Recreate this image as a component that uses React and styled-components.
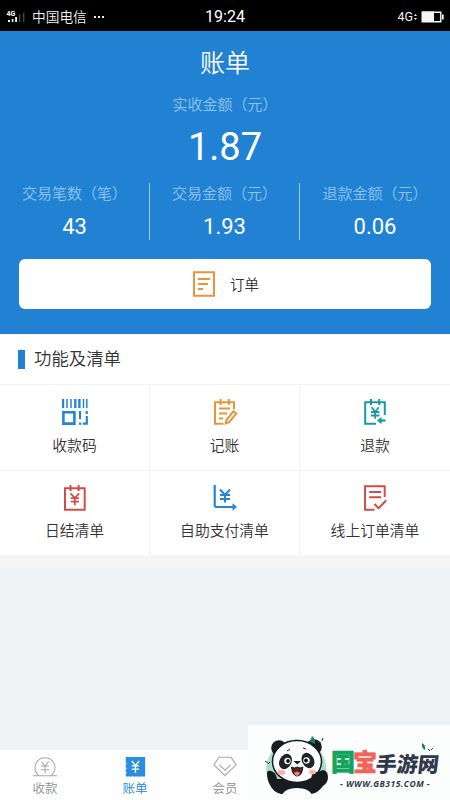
import React from 'react';
import styled, { createGlobalStyle } from 'styled-components';

const GlobalStyle = createGlobalStyle`
  * {
    box-sizing: border-box;
  }

  body {
    margin: 0;
    background: #eef2f5;
    font-family: Roboto, 'Noto Sans CJK SC', sans-serif;
    font-weight: 350;
    color: #333333;
  }
`;

const Page = styled.div`
  position: relative;
  width: 450px;
  height: 800px;
  display: flex;
  flex-direction: column;
  overflow: hidden;
`;

// Status bar
const StatusBar = styled.header`
  height: 31px;
  flex: none;
  display: grid;
  grid-template-columns: 1fr auto 1fr;
  align-items: center;
  padding: 2px 6px 0;
  background: #000000;
  color: #f2f2f2;
  line-height: 20px;
`;

const Carrier = styled.div`
  display: flex;
  align-items: center;
  gap: 6px;
  font-size: 13.7px;
`;

const Clock = styled.div`
  font-size: 16px;
  font-weight: 400;
  color: #ffffff;
`;

const Power = styled.div`
  display: flex;
  align-items: center;
  justify-content: flex-end;
  font-size: 12.5px;
  font-weight: 400;
`;

// Summary
const Summary = styled.section`
  height: 303px;
  flex: none;
  display: flex;
  flex-direction: column;
  align-items: center;
  padding: 17px 19px 0;
  background: #2182d4;
  color: #ffffff;
`;

const Title = styled.h1`
  margin: 0;
  font-size: 25px;
  font-weight: 350;
  line-height: 32px;
`;

const Label = styled.div`
  font-size: 15px;
  line-height: 20px;
  white-space: nowrap;
  color: #8fc2ee;
`;

const TotalLabel = styled(Label)`
  margin-top: 15px;
`;

const Total = styled.div`
  margin-top: 12px;
  font-size: 38px;
  font-weight: 400;
  line-height: 40px;
`;

const Stats = styled.div`
  display: grid;
  grid-template-columns: repeat(3, 150px);
  width: 450px;
  margin-top: 16px;
`;

const Stat = styled.div`
  height: 57px;
  display: flex;
  flex-direction: column;
  align-items: center;
  padding-top: 1px;
  border-right: ${({ $last }) => ($last ? 'none' : '1px solid #9cc9ee')};
`;

const StatValue = styled.div`
  margin-top: 9px;
  font-size: 22px;
  font-weight: 400;
  line-height: 28px;
`;

const OrderButton = styled.button`
  width: 412px;
  height: 50px;
  margin: 19px 0 0;
  padding: 0 0 1px;
  display: flex;
  align-items: center;
  justify-content: center;
  gap: 13px;
  border: none;
  border-radius: 6px;
  background: #ffffff;
  color: #333333;
  font-family: inherit;
  font-size: 14.5px;
  font-weight: 350;
`;

// Functions
const SectionTitle = styled.h2`
  height: 50px;
  flex: none;
  margin: 0;
  padding-left: 18px;
  display: flex;
  align-items: center;
  gap: 9px;
  background: #ffffff;
  font-size: 17.4px;
  font-weight: 350;
  line-height: 24px;

  &::before {
    content: '';
    width: 7px;
    height: 19px;
    background: #2182d4;
  }
`;

const Grid = styled.section`
  display: grid;
  grid-template-columns: repeat(3, 150px);
  grid-template-rows: 86px 85px;
  flex: none;
  background: #ffffff;
`;

const Cell = styled.div`
  display: flex;
  flex-direction: column;
  align-items: center;
  padding-top: 14px;
  border-top: 1px solid #f3f3f3;
  border-right: 1px solid #f3f3f3;
  font-size: 14.8px;
  line-height: 20px;

  &:nth-child(3n) {
    border-right: none;
  }

  svg {
    margin-bottom: 11px;
  }

  &:nth-child(n + 4) svg {
    margin-bottom: 10px;
  }
`;

const Spacer = styled.div`
  flex: 1;
  border-top: 13px solid #f5f5f5;
  background: #eef2f5;
`;

// Bottom tabs
const TabBar = styled.nav`
  height: 50px;
  flex: none;
  display: grid;
  grid-template-columns: repeat(5, 90px);
  background: #fefefe;
`;

const Tab = styled.div`
  display: flex;
  flex-direction: column;
  align-items: center;
  padding-top: 5px;
  color: ${({ $active }) => ($active ? '#2588d8' : '#8f8f8f')};
  font-size: 12.5px;
  line-height: 18px;

  svg {
    margin-bottom: 1px;
  }
`;

// Site badge over the lower right corner
const Badge = styled.aside`
  position: absolute;
  right: 0;
  bottom: 0;
  width: 202px;
  height: 75px;
  display: flex;
  padding-left: 12px;
  background: #fcfdfd;
`;

const Brand = styled.div`
  display: flex;
  flex-direction: column;
  padding: 20px 0 0 3px;
`;

const BrandName = styled.div`
  position: relative;
  display: flex;
  align-items: center;
  height: 32px;
  font-family: 'Noto Sans CJK SC', sans-serif;
  font-weight: 900;
  line-height: 32px;
`;

const BrandMark = styled.span`
  width: 22px;
  font-size: 24px;
  color: ${({ $color }) => $color};
  -webkit-text-stroke: 0.6px ${({ $color }) => $color};
`;

const BrandRest = styled.span`
  margin: 4px 0 0 1px;
  font-size: 21px;
  color: #30394a;
  transform: skewX(-7deg);
`;

const Sprout = styled.svg`
  position: absolute;
  left: 90px;
  top: -4px;
`;

const BrandUrl = styled.div`
  padding: 1px 0 0 9px;
  font-family: 'Open Sans', sans-serif;
  font-size: 8.5px;
  font-style: italic;
  font-weight: 700;
  line-height: 12px;
  letter-spacing: 0.5px;
  white-space: nowrap;
  color: #30394a;
`;

const Icon = ({ size = 26, color, width = 2, children }) => (
  <svg width={size} height={size} viewBox="0 0 26 26" fill="none" stroke={color} strokeWidth={width}>
    {children}
  </svg>
);

const SignalIcon = () => (
  <svg width="20" height="14" viewBox="0 0 20 14" fill="#ffffff">
    <text x="0.5" y="5.6" fontSize="7" fontWeight="700" fontFamily="Roboto">4G</text>
    <path d="M2 10h2v2H2zM5.800 9h1.600v3H5.800zM9.200 7H11v5H9.200z" />
    <path d="M13 4.500h1.400V12H13zM17 2.500h1.400V12H17z" fill="#484848" />
  </svg>
);

const MoreIcon = () => (
  <svg width="12" height="4" viewBox="0 0 12 4" fill="#eeeeee">
    <path d="M1 1h2v2H1zM5 1h2v2H5zM9 1h2v2H9z" />
  </svg>
);

const BatteryIcon = () => (
  <svg width="31" height="14" viewBox="0 0 31 14" fill="#f5f5f5">
    <path d="M1 6l1.500-2L4 6zM1 8l1.500 2L4 8z" />
    <path d="M9 1.500h12v10H9z" />
    <path d="M9.200 2.200h18.600v9.600H9.200z" fill="none" stroke="#f5f5f5" strokeWidth="1.400" />
    <path d="M29 4.500h1.700v5H29z" />
  </svg>
);

const OrderIcon = () => (
  <Icon color="#e8953a">
    <path d="M3 1.200h20v23.600H3z" />
    <path d="M7 8h12M7 13h10M7 18h5" />
  </Icon>
);

const CodeIcon = () => (
  <Icon color="#2585d5">
    <path d="M1 0v9M13.300 0v9M17.400 0v9" strokeWidth="2.400" />
    <path d="M5 0v9M9 0v9M21.500 0v9M24.800 0v9" strokeWidth="1.500" />
    <path d="M1.400 13.200h11v11.400h-11z" strokeWidth="2.600" />
    <path d="M18 12v8M24.700 12v3M17 24.600h2.300M20.800 24.600h4V17" strokeWidth="2.200" />
  </Icon>
);

const NoteIcon = () => (
  <Icon color="#e8953a">
    <path d="M22 10V3.200H3v21.600h8.500M8.500 0v6M16.800 0v6" />
    <path d="M7 9.500h11M7 14.500h8M7 19.500h4" />
    <path d="M21.500 12.200l2.800 2.400-7.200 8.600-3.400 1.200.7-3.400z" />
  </Icon>
);

const RefundIcon = () => (
  <Icon color="#189aa3">
    <path d="M22.800 16V3.200H3.200v21.600H14M9 0v6M17.200 0v6" />
    <path d="M9.500 8.200l3.700 4.500 3.700-4.500M9 13h8.500M9 16.500h8.500M13.200 12.500v7.200" strokeWidth="1.800" />
    <path d="M23.500 21.500h-5" strokeWidth="2.200" />
    <path d="M19.500 17.800v7.400L15 21.500z" fill="#189aa3" stroke="none" />
  </Icon>
);

const DailyIcon = () => (
  <Icon color="#d24c48">
    <path d="M3 3.200h19.700v21.600H3zM8.500 0v6M16.600 0v6" />
    <path d="M8.500 8.300l4.300 4.700 4.300-4.700M8.700 13.200H17M8.700 16.700H17M12.800 12.800v7.400" strokeWidth="1.800" />
  </Icon>
);

const SelfPayIcon = () => (
  <Icon color="#2585d5">
    <path d="M2.700 0v20q0 2 2 2H22" strokeWidth="2.200" />
    <path d="M20.500 18.300v7.400L25 22z" fill="#2585d5" stroke="none" />
    <path d="M8 4.500l5 5.500 5-5.500M8 10h10M8 14h10M13 9.800v7.800" />
  </Icon>
);

const OnlineIcon = () => (
  <Icon color="#d24c48">
    <path d="M22.700 12V1.200H3v23.600h9.500M7.200 7h12M7.200 12.300h12M12.500 19l4.100 4.200 7.600-8" />
  </Icon>
);

const CollectTab = () => (
  <Icon size={24} color="#a7a7a7" width={1.1}>
    <path d="M0 22.500h26M6.500 22.300a10.800 10.800 0 1 1 13 0" />
    <path d="M9 7l4 5 4-5M8.500 12h9M8.500 16h9M13 12v8" />
  </Icon>
);

const BillTab = () => (
  <Icon size={24} color="#ffffff" width={1.5}>
    <path d="M3 2.300h21v21H3v-3l1.300-1-1.300-1v-3l1.300-1-1.300-1v-3l1.300-1L3 8.300z" fill="#2b8dde" stroke="none" />
    <path d="M9.500 6.500l4 5 4-5M9.500 11.800h8M9.500 15.300h8M13.500 12v7.500" />
  </Icon>
);

const MemberTab = () => (
  <Icon size={24} color="#aaaaaa" width={1.2}>
    <path d="M6.500 2.500h13l5.500 8.200-12 11.800L1 10.700zM6.800 10.500L13 16.500l6.200-6" />
  </Icon>
);

const Panda = () => (
  <svg width="68" height="75" viewBox="0 0 68 75">
    <path d="M12 62A30 30 0 1 1 63 58z" fill="#a8dfc5" />
    <path d="M7 48q0-3 4-2 5 1 6 8h38q1-8 8-9 5 1 5 7 0 6-5 9-5 7-12 8H21q-8-2-11-9-3-5-3-12z" fill="#171c1e" />
    <circle cx="19" cy="23" r="7.800" fill="#171c1e" />
    <circle cx="54" cy="22" r="7.800" fill="#171c1e" />
    <ellipse cx="37" cy="36.500" rx="24.500" ry="21" fill="#ffffff" stroke="#171c1e" strokeWidth="1.500" />
    <circle cx="56.500" cy="52" r="5" fill="#171c1e" />
    <path d="M22 70q3-7 15-7t15 7z" fill="#fcfdfd" />
    <ellipse cx="25.500" cy="36.500" rx="6" ry="8" fill="#202426" transform="rotate(28 25.500 36.500)" />
    <ellipse cx="48" cy="35.500" rx="6" ry="8" fill="#202426" transform="rotate(-28 48 35.500)" />
    <circle cx="27.500" cy="36" r="3.200" fill="#ffffff" />
    <circle cx="46.500" cy="35.500" r="3.200" fill="#ffffff" />
    <circle cx="28" cy="36" r="1.900" fill="#111111" />
    <circle cx="46" cy="35.500" r="1.900" fill="#111111" />
    <ellipse cx="21.500" cy="47.500" rx="4" ry="2.500" fill="#ffb3a8" />
    <ellipse cx="52.500" cy="47" rx="3.500" ry="2.300" fill="#ffb3a8" />
    <path d="M33.500 36h7.500L37.200 39.500z" fill="#171c1e" />
    <path d="M31.500 42q3 2 5.700 0 3 2 5.700 0-1 9-5.700 9t-5.700-9z" fill="#532422" stroke="#171c1e" />
    <path d="M34 48q3-3 6 0-1 3-3 3t-3-3z" fill="#f47c78" />
    <path d="M27 26l3-2M43 23l3 1M5 36l3 2M8 39l2-2M58 17l3 1M62 16l1-3" stroke="#263033" strokeWidth="1" />
    <path d="M50 17l2-6q4 3 3 8z" fill="#187c59" />
  </svg>
);

const stats = [
  { label: '交易笔数（笔）', value: '43' },
  { label: '交易金额（元）', value: '1.93' },
  { label: '退款金额（元）', value: '0.06' },
];

const functions = [
  { label: '收款码', icon: <CodeIcon /> },
  { label: '记账', icon: <NoteIcon /> },
  { label: '退款', icon: <RefundIcon /> },
  { label: '日结清单', icon: <DailyIcon /> },
  { label: '自助支付清单', icon: <SelfPayIcon /> },
  { label: '线上订单清单', icon: <OnlineIcon /> },
];

const tabs = [
  { label: '收款', icon: <CollectTab /> },
  { label: '账单', icon: <BillTab />, active: true },
  { label: '会员', icon: <MemberTab /> },
];

const App = () => (
  <>
    <GlobalStyle />
    <Page>
      <StatusBar>
        <Carrier>
          <SignalIcon />
          中国电信
          <MoreIcon />
        </Carrier>
        <Clock>19:24</Clock>
        <Power>
          4G
          <BatteryIcon />
        </Power>
      </StatusBar>

      <Summary>
        <Title>账单</Title>
        <TotalLabel>实收金额（元）</TotalLabel>
        <Total>1.87</Total>
        <Stats>
          {stats.map((stat, index) => (
            <Stat key={stat.label} $last={index === stats.length - 1}>
              <Label>{stat.label}</Label>
              <StatValue>{stat.value}</StatValue>
            </Stat>
          ))}
        </Stats>
        <OrderButton>
          <OrderIcon />
          订单
        </OrderButton>
      </Summary>

      <SectionTitle>功能及清单</SectionTitle>
      <Grid>
        {functions.map((item) => (
          <Cell key={item.label}>
            {item.icon}
            {item.label}
          </Cell>
        ))}
      </Grid>
      <Spacer />

      <TabBar>
        {tabs.map((tab) => (
          <Tab key={tab.label} $active={tab.active}>
            {tab.icon}
            {tab.label}
          </Tab>
        ))}
      </TabBar>

      <Badge>
        <Panda />
        <Brand>
          <BrandName>
            <BrandMark $color="#12a45b">国</BrandMark>
            <BrandMark $color="#f36458">宝</BrandMark>
            <BrandRest>手游网</BrandRest>
            <Sprout width="14" height="12" viewBox="0 0 14 12">
              <path d="M1 2q4 2 3 7Q0 7 1 2z" fill="#187c59" />
              <path d="M7 8l2 2M10 9l2-2" stroke="#30394a" />
            </Sprout>
          </BrandName>
          <BrandUrl>- WWW.GB315.COM -</BrandUrl>
        </Brand>
      </Badge>
    </Page>
  </>
);

export default App;
